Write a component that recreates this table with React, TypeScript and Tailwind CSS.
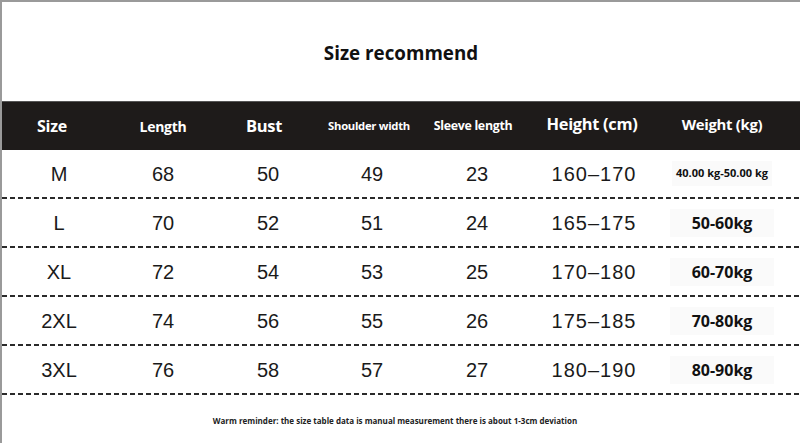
import React from "react";

const headers = [
    {label: "Size", cls: "text-[16px] pr-[14px]"},
    {label: "Length", cls: "text-[14px]"},
    {label: "Bust", cls: "text-[16.5px] pr-[8px]"},
    {label: "Shoulder width", cls: "text-[11.3px] pr-[6px]"},
    {label: "Sleeve length", cls: "text-[12.4px] pr-[8px]"},
    {label: "Height (cm)", cls: "text-[16.4px] pr-[4px] -mt-[4px]"},
    {label: "Weight (kg)", cls: "text-[14.9px] -mt-[4px]"},
];

const rows = [
    ["M", "68", "50", "49", "23", "160–170", "40.00 kg-50.00 kg"],
    ["L", "70", "52", "51", "24", "165–175", "50-60kg"],
    ["XL", "72", "54", "53", "25", "170–180", "60-70kg"],
    ["2XL", "74", "56", "55", "26", "175–185", "70-80kg"],
    ["3XL", "76", "58", "57", "27", "180–190", "80-90kg"],
];

const cols = "grid grid-cols-[114px_94px_116px_92px_118px_116px_140px]";

const SizeChart = () => {
    return (
        <div className="w-[800px] h-[443px] bg-white border-t-2 border-l-2 border-[#9a9a9a] overflow-hidden text-[#1a1a1a]">
            {/* Title */}
            <div className="h-[99px] flex items-center justify-center pt-[3px]">
                <h1 className="text-[18.8px] font-bold font-['Open_Sans',sans-serif] text-[#111]">Size recommend</h1>
            </div>

            {/* Header bar */}
            <div className={`${cols} h-[49px] bg-[#1e1b1a] border-t border-[#555] items-center text-white font-bold font-['Open_Sans',sans-serif]`}>
                {headers.map((h) => (
                    <div key={h.label} className={`text-center whitespace-nowrap tracking-[-0.3px] ${h.cls}`}>
                        {h.label}
                    </div>
                ))}
            </div>

            {/* Rows */}
            {rows.map((row) => (
                <div key={row[0]}>
                    <div className={`${cols} h-[47px] items-center font-['Liberation_Sans',Arial,sans-serif] text-[20px]`}>
                        {row.map((cell, i) => {
                            if (i === 6) {
                                const small = cell.length > 10;
                                return (
                                    <div key={i} className="flex justify-center">
                                        <span
                                            className={`bg-[#fafafa] font-['Open_Sans',sans-serif] font-bold text-[#111] ${
                                                small ? "text-[11px] px-[4px] py-[4px]" : "text-[16px] px-[22px] py-[2px]"
                                            }`}
                                        >
                                            {cell}
                                        </span>
                                    </div>
                                );
                            }
                            return (
                                <div key={i} className={`text-center ${i === 5 ? "tracking-[1px]" : ""}`}>
                                    {cell}
                                </div>
                            );
                        })}
                    </div>
                    <div className="h-[2px] bg-[repeating-linear-gradient(to_right,#2a2a2a_0_5px,transparent_5px_8px)]" />
                </div>
            ))}

            {/* Footer note */}
            <div className="h-[47px] flex items-center justify-center pr-[12px] pt-[5px]">
                <p className="text-[8px] font-bold font-['Open_Sans',sans-serif] text-[#222]">
                    Warm reminder: the size table data is manual measurement there is about 1-3cm deviation
                </p>
            </div>
        </div>
    );
};

export default function App() {
    return <SizeChart />;
}
